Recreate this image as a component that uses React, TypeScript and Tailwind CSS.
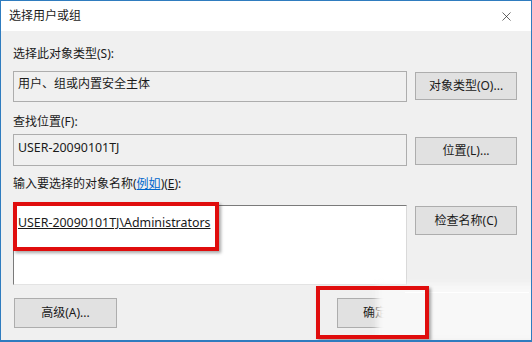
import { X } from 'lucide-react';

const font = 'font-["Noto_Sans","Noto_Sans_CJK_SC",sans-serif]';

function Button({ label, className = '' }: { label: string; className?: string }) {
  return (
    <div
      className={`flex items-center justify-center bg-[#e1e1e1] border border-[#adadad] text-[12px] leading-[16px] text-[#1a1a1a] ${className}`}
    >
      {label}
    </div>
  );
}

export default function App() {
  return (
    <div
      className={`relative w-[532px] h-[342px] overflow-hidden bg-[#f0f0f0] border border-b-2 border-[#2f7cbf] ${font} text-[12px] text-[#1a1a1a]`}
    >
      {/* title bar */}
      <div className="h-[30px] bg-white flex items-center justify-between pl-[8px] pr-[17px]">
        <span className="leading-[16px]">选择用户或组</span>
        <X size={15} strokeWidth={1.1} className="text-[#222]" />
      </div>

      <div className="px-[12px]">
        <div className="mt-[15px] h-[16px] leading-[16px]">选择此对象类型(S):</div>
        <div className="mt-[9px] flex gap-[8px]">
          <div className="w-[394px] h-[31px] border border-[#adadad] bg-[#f0f0f0] pl-[4px] pt-[4px] leading-[16px]">
            用户、组或内置安全主体
          </div>
          <Button label="对象类型(O)..." className="w-[102px] h-[28px] mt-[1px]" />
        </div>

        <div className="mt-[12px] h-[16px] leading-[16px]">查找位置(F):</div>
        <div className="mt-[4px] flex gap-[8px]">
          <div className="w-[394px] h-[32px] border border-[#adadad] bg-[#f0f0f0] pl-[4px] pt-[5px] leading-[16px] text-[12.4px]">
            USER-20090101TJ
          </div>
          <Button label="位置(L)..." className="w-[102px] h-[28px] mt-[3px]" />
        </div>

        <div className="mt-[10px] h-[16px] leading-[16px]">
          输入要选择的对象名称(<span className="text-[#0066cc] underline">例如</span>)(<span className="underline">E</span>):
        </div>
        <div className="mt-[13px] flex gap-[8px]">
          <div className="w-[394px] h-[80px] bg-white border border-[#7a7a7a] border-r-[#d9d9d9] border-b-[#e3e3e3] pl-[4px] pt-[9px] leading-[16px] text-[12.4px]">
            <span className="underline">USER-20090101TJ\Administrators</span>
          </div>
          <Button label="检查名称(C)" className="w-[102px] h-[29px] mt-[1px]" />
        </div>

        <div className="mt-[13px] flex">
          <Button label="高级(A)..." className="ml-[1px] w-[103px] h-[30px]" />
          <Button label="确定" className="ml-[220px] w-[76px] h-[30px]" />
        </div>
      </div>

      {/* erased cancel button area */}
      <div className="absolute left-[376px] top-[283px] w-[170px] h-[56px] bg-[#f8f8f8] blur-[3px]" />
      <div className="absolute left-[404px] top-[291px] w-[124px] h-[1px] bg-white" />

      {/* red highlight frames */}
      <div className="absolute left-[12px] top-[201px] w-[206px] h-[49px] border-[4px] border-[#e00d0d] shadow-[2px_2px_3px_rgba(0,0,0,0.35)]" />
      <div className="absolute left-[315px] top-[285px] w-[113px] h-[53px] border-[4px] border-[#e00d0d] shadow-[2px_2px_3px_rgba(0,0,0,0.35)]" />
    </div>
  );
}
